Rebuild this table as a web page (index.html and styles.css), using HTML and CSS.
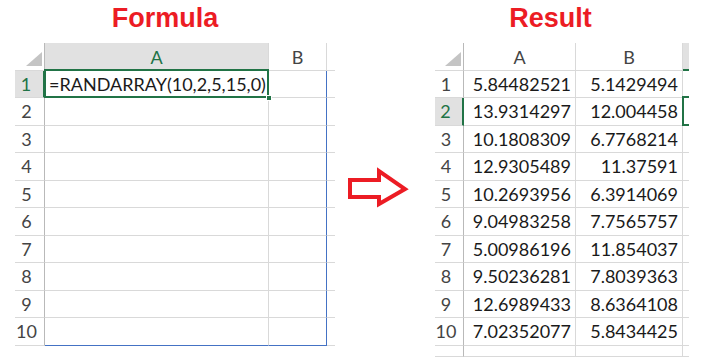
FILE: index.html
```html
<!DOCTYPE html>
<html lang="en">
<head>
    <meta charset="UTF-8">
    <meta name="viewport" content="width=device-width, initial-scale=1.0">
    <title>RANDARRAY</title>
    <link rel="stylesheet" href="styles.css">
</head>
<body>

    <div class="page">
        <section class="panel panel-formula">
            <h1 class="title">Formula</h1>
            <div class="sheet sheet-formula">
                <div class="corner"></div>
                <div class="colhead is-active">A</div>
                <div class="colhead">B</div>
                <div class="colhead edge"></div>

                <div class="rowhead is-active">1</div>
                <div class="cell cell-formula">=RANDARRAY(10,2,5,15,0)<span class="fill-handle"></span></div>
                <div class="cell print-right"></div>
                <div class="cell edge"></div>

                <div class="rowhead">2</div><div class="cell"></div><div class="cell print-right"></div><div class="cell edge"></div>
                <div class="rowhead">3</div><div class="cell"></div><div class="cell print-right"></div><div class="cell edge"></div>
                <div class="rowhead">4</div><div class="cell"></div><div class="cell print-right"></div><div class="cell edge"></div>
                <div class="rowhead">5</div><div class="cell"></div><div class="cell print-right"></div><div class="cell edge"></div>
                <div class="rowhead">6</div><div class="cell"></div><div class="cell print-right"></div><div class="cell edge"></div>
                <div class="rowhead">7</div><div class="cell"></div><div class="cell print-right"></div><div class="cell edge"></div>
                <div class="rowhead">8</div><div class="cell"></div><div class="cell print-right"></div><div class="cell edge"></div>
                <div class="rowhead">9</div><div class="cell"></div><div class="cell print-right"></div><div class="cell edge"></div>
                <div class="rowhead">10</div><div class="cell print-bottom"></div><div class="cell print-right print-bottom"></div><div class="cell edge"></div>
            </div>
        </section>

        <svg class="arrow" width="64" height="42" viewBox="0 0 64 42">
            <polygon points="4,14 33,14 33,5 59,23 33,38 33,31 4,31" fill="#fff" stroke="#ec1c24" stroke-width="4" stroke-linejoin="miter"/>
        </svg>

        <section class="panel panel-result">
            <h1 class="title">Result</h1>
            <div class="sheet sheet-result">
                <div class="corner"></div>
                <div class="colhead">A</div>
                <div class="colhead">B</div>
                <div class="colhead edge is-picked"></div>

                <div class="rowhead">1</div><div class="cell num">5.84482521</div><div class="cell num">5.1429494</div><div class="cell edge"></div>
                <div class="rowhead is-active">2</div><div class="cell num">13.9314297</div><div class="cell num">12.004458</div><div class="cell edge cell-picked"></div>
                <div class="rowhead">3</div><div class="cell num">10.1808309</div><div class="cell num">6.7768214</div><div class="cell edge"></div>
                <div class="rowhead">4</div><div class="cell num">12.9305489</div><div class="cell num">11.37591</div><div class="cell edge"></div>
                <div class="rowhead">5</div><div class="cell num">10.2693956</div><div class="cell num">6.3914069</div><div class="cell edge"></div>
                <div class="rowhead">6</div><div class="cell num">9.04983258</div><div class="cell num">7.7565757</div><div class="cell edge"></div>
                <div class="rowhead">7</div><div class="cell num">5.00986196</div><div class="cell num">11.854037</div><div class="cell edge"></div>
                <div class="rowhead">8</div><div class="cell num">9.50236281</div><div class="cell num">7.8039363</div><div class="cell edge"></div>
                <div class="rowhead">9</div><div class="cell num">12.6989433</div><div class="cell num">8.6364108</div><div class="cell edge"></div>
                <div class="rowhead">10</div><div class="cell num">7.02352077</div><div class="cell num">5.8434425</div><div class="cell edge"></div>
                <div class="rowhead rowhead-cut">11</div><div class="cell"></div><div class="cell"></div><div class="cell edge"></div>
            </div>
        </section>
    </div>

</body>
</html>
```

FILE: styles.css
```css
:root {
    --excel-green: #217346;
    --title-red: #ec1c24;
    --grid-line: #d9d9d9;
    --head-line: #b9b9b9;
    --head-active: #e1e1e1;
    --print-blue: #4472c4;
}

* {
    margin: 0;
    padding: 0;
    box-sizing: border-box;
}

body {
    background: #fff;
    font-family: Lato, 'Open Sans', sans-serif;
    color: #1a1a1a;
}

.page {
    display: flex;
    align-items: flex-start;
    padding-left: 15px;
}

.title {
    height: 43px;
    padding-top: 3px;
    font-family: 'Liberation Sans', Arial, sans-serif;
    font-size: 27px;
    line-height: 30px;
    font-weight: 700;
    color: var(--title-red);
    text-align: center;
}

.panel-formula .title {
    width: 300px;
}

.panel-result {
    margin-left: 25px;
}

.panel-result .title {
    width: 231px;
}

.arrow {
    margin-left: 11px;
    margin-top: 166px;
}

/* sheet grids */
.sheet {
    display: grid;
    grid-auto-rows: 27.5px;
    font-size: 18px;
}

.sheet-formula {
    grid-template-columns: 30px 224px 58px 8px;
}

.sheet-result {
    grid-template-columns: 29px 112px 107px 6px;
    grid-template-rows: repeat(11, 27.5px) 11px;
    overflow: hidden;
}

.corner,
.colhead,
.rowhead,
.cell {
    border-right: 1px solid var(--grid-line);
    border-bottom: 1px solid var(--grid-line);
    display: flex;
    align-items: center;
    white-space: nowrap;
}

.corner {
    justify-content: flex-end;
    align-items: flex-end;
    padding: 0 2px 4px 0;
    border-right-color: var(--head-line);
}

.corner::after {
    content: "";
    width: 0;
    height: 0;
    border-left: 16px solid transparent;
    border-bottom: 14px solid #c4c4c4;
}

.colhead {
    justify-content: center;
    font-size: 18px;
    color: #444;
    padding-top: 2px;
}

.rowhead {
    justify-content: center;
    padding-right: 6px;
    color: #444;
    border-right-color: var(--head-line);
}

.is-active {
    background: var(--head-active);
    color: var(--excel-green);
}

.rowhead.is-active {
    border-right: 2px solid var(--excel-green);
    background-clip: padding-box;
}

.colhead.is-picked {
    background: var(--head-active);
    border-bottom: 2px solid var(--excel-green);
}

.edge {
    border-right: none;
}

.rowhead-cut {
    align-items: flex-start;
    padding-top: 8px;
    line-height: 1;
}

.num {
    justify-content: flex-end;
    padding-right: 4px;
}

/* print area border on the formula sheet */
.print-right {
    border-right-color: var(--print-blue);
}

.print-bottom {
    border-bottom-color: var(--print-blue);
}

/* selected cells */
.cell-formula {
    position: relative;
    padding-left: 4px;
}

.cell-formula::before {
    content: "";
    position: absolute;
    top: -2px;
    left: -1px;
    right: -1px;
    bottom: -1px;
    border: 2px solid var(--excel-green);
}

.fill-handle {
    position: absolute;
    right: -4px;
    bottom: -4px;
    width: 6px;
    height: 6px;
    background: var(--excel-green);
    border: 1px solid #fff;
}

.cell-picked {
    position: relative;
}

.cell-picked::before {
    content: "";
    position: absolute;
    top: -2px;
    left: -1px;
    width: 30px;
    bottom: -1px;
    border: 2px solid var(--excel-green);
}
```
